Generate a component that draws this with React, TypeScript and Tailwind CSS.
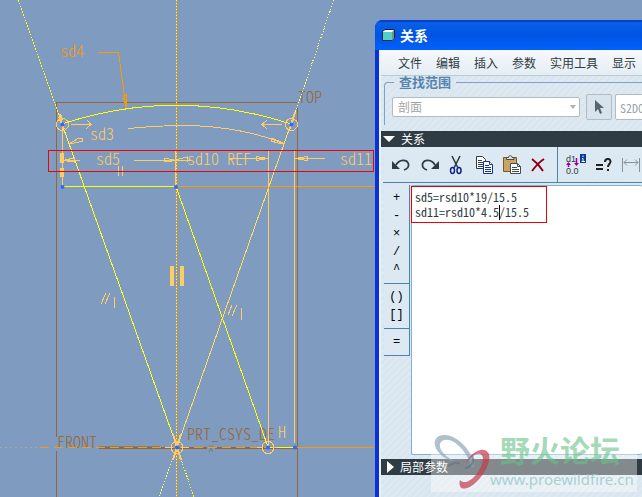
import React, { useState } from 'react'

const MENUS = ['文件', '编辑', '插入', '参数', '实用工具', '显示']

const OPERATORS = [
  ['+', '-', '×', '/', '^'],
  ['()', '[]'],
  ['='],
]

const HATCH =
  'bg-[#d9e6ef] bg-[repeating-linear-gradient(135deg,#d9e6ef_0px,#d9e6ef_3px,#dfe9f1_3px,#dfe9f1_5px)]'

const Sketch: React.FC = () => (
  <svg
    width="375"
    height="497"
    viewBox="0 0 375 497"
    fill="none"
    className="block shrink-0 font-['Noto_Sans_CJK_SC','Liberation_Mono',monospace] text-[16px] font-light [font-feature-settings:'hwid']"
    role="img"
    aria-label="Sketch"
  >
    {/* datum planes */}
    <g stroke="#996633" shapeRendering="crispEdges">
      <path d="M56.5 437V102.5H297M56.5 451V497M297.5 108V497" />
      <path d="M99 448H207M215 448H297" strokeWidth="2" />
      <path d="M99 446.5H160" stroke="#7f8083" />
    </g>
    <path d="M209 445L213 452M213 445L209 452" stroke="#777a80" />
    <g fill="#996633">
      <text x="298" y="103">TOP</text>
      <text x="57" y="448">FRONT</text>
      <text x="187" y="440">PRT_CSYS_DE</text>
    </g>

    {/* centerlines */}
    <g shapeRendering="crispEdges">
      <path d="M0 447.5H40" stroke="#a1a8ad" strokeDasharray="2 3" />
      <path d="M40 447.5H297" stroke="#ff9900" strokeDasharray="9 5" />
      <path d="M297 447.5H375M177 186.5H375" stroke="#ff9900" />
      <path d="M176.5 0V497" stroke="#ff9900" />
      <path d="M176.5 0V497" stroke="#ffff33" strokeDasharray="1 2" />
      <path d="M18 0L62 124M177 447L194 497" stroke="#ffff00" strokeDasharray="1.6 1.4" />
      <path d="M62 124L177 447" stroke="#ffff22" />
      <path d="M334 0L291 124M177 447L159 497" stroke="#ffff66" strokeDasharray="1.4 1.6" />
      <path d="M291 124L177 447" stroke="#ffdd55" />
    </g>

    {/* geometry */}
    <g stroke="#ffff00" shapeRendering="crispEdges">
      <path d="M62 124Q176 86.500 291 124" />
      <path d="M62 186.500H176L268 447H295" />
    </g>

    {/* dimensions and constraints */}
    <g stroke="#ffcc66" shapeRendering="crispEdges">
      <path d="M128 128.500Q160 125 193 125.500Q246 128 285 144" />
      <path d="M69 144L77 139L82 138L83 141L70 144M285 144L272 138L271 141L278 143L285 144" />
      <path d="M71 124.500H91M87 120L91 124.500L86 129M282 124.500H262M267 120L262 124.500L267 129" />
      <path d="M62.500 128V187M175.500 151V187M268.500 151V447M294.500 151V443" />
      <path d="M62 160.500H80M63 160.500L74 158V162L63 160.500M134 160.500H191M176 160.500L164 158V162L176 160.500M177 159.500L187 157V162" />
      <path d="M229 158.500H268L256 156.500V160.500L268 158.500M325 158.500H295L307 156.500V160.500L295 158.500" />
      <path d="M118.500 166V176M122.500 166V176" />
      <path d="M101 304L106 293M105 304L110 293M114.500 297V308M228 315L232 305M232 316L237 305M241.500 308V320" />
      <path d="M59 117L64 129M60 114L62 120M295 112L290 129" strokeWidth="2" />
      <path d="M165 447H173M181 447H189M257 447.500H263M272 447.500H277" />
      <path d="M173 434L177 447L181 434M173 460L177 447L181 460" strokeWidth="2" />
      <circle cx="62.500" cy="124.500" r="6" />
      <circle cx="291.500" cy="124.500" r="6" />
      <circle cx="177" cy="447.500" r="6" />
      <circle cx="268" cy="447.500" r="6" />
    </g>
    <path d="M170 266H174V286H170ZM180 266H184V286H180ZM60 153H64V163H60ZM60 168H64V177H60Z" fill="#ffcc66" />
    <g fill="#ffcc66">
      <text x="90" y="140">sd3</text>
      <text x="96" y="165">sd5</text>
      <text x="187" y="165">sd10 REF</text>
      <text x="340" y="165">sd11</text>
      <text x="278" y="438">H</text>
    </g>
    <text x="60" y="57" fill="#ff9900">sd4</text>
    <path d="M98 52.500H118.500L126 107L123 96L126 95V107" stroke="#ff9900" shapeRendering="crispEdges" />

    <g fill="#3366ff">
      <circle cx="62.500" cy="124.500" r="2" />
      <circle cx="291.500" cy="124.500" r="2" />
      <circle cx="62.500" cy="187" r="2" />
      <circle cx="176" cy="187" r="2" />
      <circle cx="177" cy="447.500" r="2" />
      <circle cx="268" cy="447.500" r="2" />
      <circle cx="295" cy="447.500" r="2" />
    </g>
    <path d="M48.500 150.500H373.500V171.500H48.500Z" stroke="#f00000" shapeRendering="crispEdges" />
  </svg>
)

const UndoIcon: React.FC<{ flip?: boolean }> = ({ flip }) => (
  <svg width="20" height="14" viewBox="0 0 20 14" fill="none" className={flip ? '-scale-x-100' : ''}>
    <path d="M5 7C8 1 16 1 17.500 6C18 9 16 11 13 12" stroke="#303c43" strokeWidth="1.800" />
    <path d="M1 3V11H9Z" fill="#303c43" />
  </svg>
)

const CutIcon: React.FC = () => (
  <svg width="14" height="20" viewBox="0 0 14 20" fill="none">
    <path d="M3 1L9 13M11 1L5 13" stroke="#303c43" strokeWidth="1.600" />
    <ellipse cx="3.500" cy="15.500" rx="2" ry="3" stroke="#10208c" strokeWidth="1.500" />
    <ellipse cx="10" cy="15.500" rx="2" ry="3" stroke="#10208c" strokeWidth="1.500" />
  </svg>
)

const CopyIcon: React.FC = () => (
  <svg width="18" height="18" viewBox="0 0 18 18" fill="#fff">
    <path d="M.500 .500H6.500L9.500 3.500V12.500H.500Z" stroke="#303c43" />
    <path d="M2 4.500H6M2 6.500H7M2 8.500H7M2 10.500H7" stroke="#303c43" />
    <path d="M7.500 5.500H13.500L16.500 8.500V17.500H7.500Z" stroke="#10309c" />
    <path d="M13.500 5.500V8.500H16.500M9 9.500H13M9 11.500H15M9 13.500H15M9 15.500H15" stroke="#10309c" />
  </svg>
)

const PasteIcon: React.FC = () => (
  <svg width="19" height="20" viewBox="0 0 19 20" fill="none">
    <path d="M.500 2.500H13.500V16.500H.500Z" fill="#c8a565" stroke="#78582b" />
    <path d="M3.500 4.500V2.500H5.500C5.500 0 9 0 9 2.500H11V4.500Z" fill="#dfe3e5" stroke="#444b50" />
    <path d="M7.500 8.500H14.500L17.500 11.500V18.500H7.500Z" fill="#fff" stroke="#444b50" />
    <path d="M14.500 8.500V11.500H17.500M9 12.500H14M9 14.500H16M9 16.500H16" stroke="#444b50" />
  </svg>
)

const DeleteIcon: React.FC = () => (
  <svg width="14" height="14" viewBox="0 0 14 14" fill="none">
    <path d="M1 1C5 4 9 8 12 13M13 1C8 4 4 9 1 13" stroke="#8d0012" strokeWidth="2" />
  </svg>
)

const DimensionIcon: React.FC = () => (
  <svg width="20" height="24" viewBox="0 0 20 24" fill="none">
    <g fill="#303c43" className="font-['Liberation_Sans',sans-serif] text-[9px]">
      <text x="0" y="9">d1</text>
      <text x="0" y="21">0.0</text>
    </g>
    <path d="M2.500 14V10M10.500 5V12" stroke="#a000a0" strokeWidth="1.500" />
    <path d="M0 12L2.500 9L5 12ZM8 10L10.500 13L13 10Z" fill="#a000a0" />
    <path d="M14 1H20V10H14Z" fill="#0b3a9c" />
    <path d="M17 2.500V4M16 5.500H17V8.500M15.500 8.500H19" stroke="#fff" />
  </svg>
)

const EvaluateIcon: React.FC = () => (
  <svg width="16" height="14" viewBox="0 0 16 14" fill="none">
    <path d="M0 7H7M0 11H7" stroke="#222" strokeWidth="2" />
    <path d="M9 4C9 0 14.500 0 14.500 3.500C14.500 6 12 6 12 9M12 11V13" stroke="#222" strokeWidth="2" />
  </svg>
)

const MeasureIcon: React.FC = () => (
  <svg width="18" height="16" viewBox="0 0 18 16" fill="none" stroke="#899198">
    <path d="M.500 1V15M17.500 1V15M2 5.500H16M5 2.500L2 5.500L5 8.500M13 2.500L16 5.500L13 8.500" />
  </svg>
)

const Watermark: React.FC = () => (
  <div className="pointer-events-none absolute right-[5px] bottom-[5px] h-[39px] w-[206px] bg-white/40">
    <svg width="60" height="58" viewBox="0 0 60 58" fill="none" className="absolute -top-5 left-0">
      <path
        d="M43 34C43 17 22 -3 8 3C-2 8 6 26 25 29C12 23 5 13 11 8C20 2 37 18 40 34Z"
        fill="#8fa5b8"
        fillOpacity=".7"
      />
      <path
        d="M34 31C40 18 54 12 58 21C61 33 45 53 36 55C31 57 27 54 29 47C36 55 52 38 52 25C50 17 42 21 34 31Z"
        fill="#c43b4b"
        fillOpacity=".7"
      />
      <path d="M34 35C40 34 44 30 41 22M17 33C22 31 24 28 29 31" stroke="#66758a" strokeWidth="2" strokeOpacity=".7" />
    </svg>
    <div className="absolute -top-5 left-[69px] font-['Noto_Sans_CJK_SC',sans-serif] text-[30px] leading-8 font-bold whitespace-nowrap text-[#66c286]/60">
      野火论坛
    </div>
    <div className="absolute top-4 left-[59px] font-['Noto_Sans',sans-serif] text-[15px] leading-5 whitespace-nowrap text-[#94c9c9]/80">
      www.proewildfire.cn
    </div>
  </div>
)

const App: React.FC = () => {
  const [relations, setRelations] = useState('sd5=rsd10*19/15.5\nsd11=rsd10*4.5/15.5')

  return (
    <div className="relative flex h-screen overflow-hidden bg-[#7f9bc0] font-['Noto_Sans_CJK_SC',sans-serif] text-[12px] leading-4 text-[#303c43]">
      <Sketch />

      <div className="mt-5 flex min-w-0 flex-1 flex-col overflow-hidden rounded-tl-lg bg-[#0831d9]">
        <header className="flex h-[30px] shrink-0 items-center gap-[5px] bg-linear-to-b from-[#0a63e8] via-[#0054e3] to-[#0061fb] pl-[7px] text-white shadow-[inset_0_2px_1px_#0a3fcc]">
          <svg width="13" height="12" viewBox="0 0 13 12">
            <path d="M.500 2.500L3 .500H12.500V9L10 11.500H.500Z" fill="#fff" stroke="#182838" />
            <path d="M1 3H10V11H1Z" fill="#4fd0c8" />
            <path d="M10 3L12 1V9L10 11Z" fill="#878787" />
          </svg>
          <h1 className="text-[14px] font-bold">关系</h1>
        </header>

        <div className={`ml-1 flex min-h-0 flex-1 flex-col border-l-2 border-[#eaf3f8] ${HATCH}`}>
          <nav className="flex h-[26px] shrink-0 items-center gap-[14px] border-b border-[#b4cdd4] bg-linear-to-b from-[#f5f8fb] to-[#e5edf4] pl-[17px] whitespace-nowrap">
            {MENUS.map((menu) => (
              <button key={menu} type="button" className="hover:underline">
                {menu}
              </button>
            ))}
          </nav>

          <fieldset className="mr-[-8px] ml-[3px] h-[49px] shrink-0 rounded-tl-[4px] border-t border-l border-[#7da2c4]">
            <legend className="ml-[9px] px-[5px] text-[13px] leading-[12px] font-bold text-[#5684b0]">查找范围</legend>
            <div className="flex items-center pt-[6px] pl-[7px]">
              <div className="relative mr-[6px] shrink-0">
                <select
                  aria-label="查找范围"
                  disabled
                  className="block h-5 w-[188px] appearance-none rounded-[2px] border border-[#b0bcc2] bg-white pl-[5px] text-[12px] leading-4 text-[#a0a5a9]"
                >
                  <option>剖面</option>
                </select>
                <svg width="6" height="4" viewBox="0 0 6 4" className="absolute top-2 right-1">
                  <path d="M0 0H6L3 4Z" fill="#a9b1b5" />
                </svg>
              </div>
              <button
                type="button"
                aria-label="选取"
                disabled
                className="mr-[3px] flex h-[26px] w-[26px] shrink-0 items-center justify-center rounded-[2px] border border-[#b0bcc2] bg-[#d7e4ed]"
              >
                <svg width="10" height="15" viewBox="0 0 10 15">
                  <path d="M1 0V12L4 9L6 14L8 13L6 8H10Z" fill="#5c646b" />
                </svg>
              </button>
              <input
                aria-label="截面名称"
                disabled
                defaultValue="S2D0001"
                className="h-[26px] w-[100px] shrink-0 rounded-[2px] border border-[#b0bcc2] bg-white pl-1 text-[12px] text-[#a0a5a9] [font-feature-settings:'hwid']"
              />
            </div>
          </fieldset>

          <button type="button" className="mt-[6px] flex h-4 shrink-0 items-center gap-[6px] bg-[#303c43] pl-[2px] text-white">
            <svg width="12" height="6" viewBox="0 0 12 6">
              <path d="M0 0H12L6 6Z" fill="#fff" />
            </svg>
            关系
          </button>

          <div className="ml-[2px] flex h-9 shrink-0 border-b border-[#4e83a5] bg-[#dce9f2]">
            <div className="flex w-[175px] shrink-0 items-center gap-[9px] border-r border-[#4e83a5] pl-2">
              <button type="button" aria-label="撤消"><UndoIcon /></button>
              <button type="button" aria-label="重做"><UndoIcon flip /></button>
              <button type="button" aria-label="剪切"><CutIcon /></button>
              <button type="button" aria-label="复制" className="ml-1"><CopyIcon /></button>
              <button type="button" aria-label="粘贴"><PasteIcon /></button>
              <button type="button" aria-label="删除"><DeleteIcon /></button>
            </div>
            <div className="flex shrink-0 items-center gap-[10px] pl-2">
              <button type="button" aria-label="切换尺寸"><DimensionIcon /></button>
              <button type="button" aria-label="计算"><EvaluateIcon /></button>
              <button type="button" aria-label="测量"><MeasureIcon /></button>
            </div>
          </div>

          <div className="mt-[2px] flex min-h-0 flex-1">
            <div className="ml-[3px] w-[26px] shrink-0 self-start border-r border-[#4e83a5] bg-[#dce9f2]">
              {OPERATORS.map((group) => (
                <div key={group[0]} className="flex flex-col border-b border-[#4e83a5] py-1">
                  {group.map((op) => (
                    <button
                      key={op}
                      type="button"
                      className="h-[18px] font-['Liberation_Mono',monospace] text-[12px] leading-[18px] text-black"
                    >
                      {op}
                    </button>
                  ))}
                </div>
              ))}
            </div>
            <div className="relative ml-px flex-1">
              <textarea
                aria-label="关系"
                wrap="off"
                spellCheck={false}
                value={relations}
                onChange={(e) => setRelations(e.target.value)}
                className="block h-full w-full resize-none overflow-hidden rounded-[2px] border border-r-0 border-[#79b5d6] bg-white pt-[3px] pl-[3px] text-[12px] leading-[15px] [font-feature-settings:'hwid']"
              />
              <div className="pointer-events-none absolute top-px left-0 h-[37px] w-[136px] border border-[#f00000]" />
              <div className="pointer-events-none absolute top-5 left-[88px] h-[15px] w-px bg-black" />
            </div>
          </div>

          <button type="button" className="mt-1 mb-[22px] flex h-4 shrink-0 items-center gap-[6px] bg-[#303c43] pl-[6px] text-white">
            <svg width="7" height="12" viewBox="0 0 7 12">
              <path d="M0 0V12L7 6Z" fill="#fff" />
            </svg>
            局部参数
          </button>
        </div>
      </div>

      <Watermark />
    </div>
  )
}

export default App
